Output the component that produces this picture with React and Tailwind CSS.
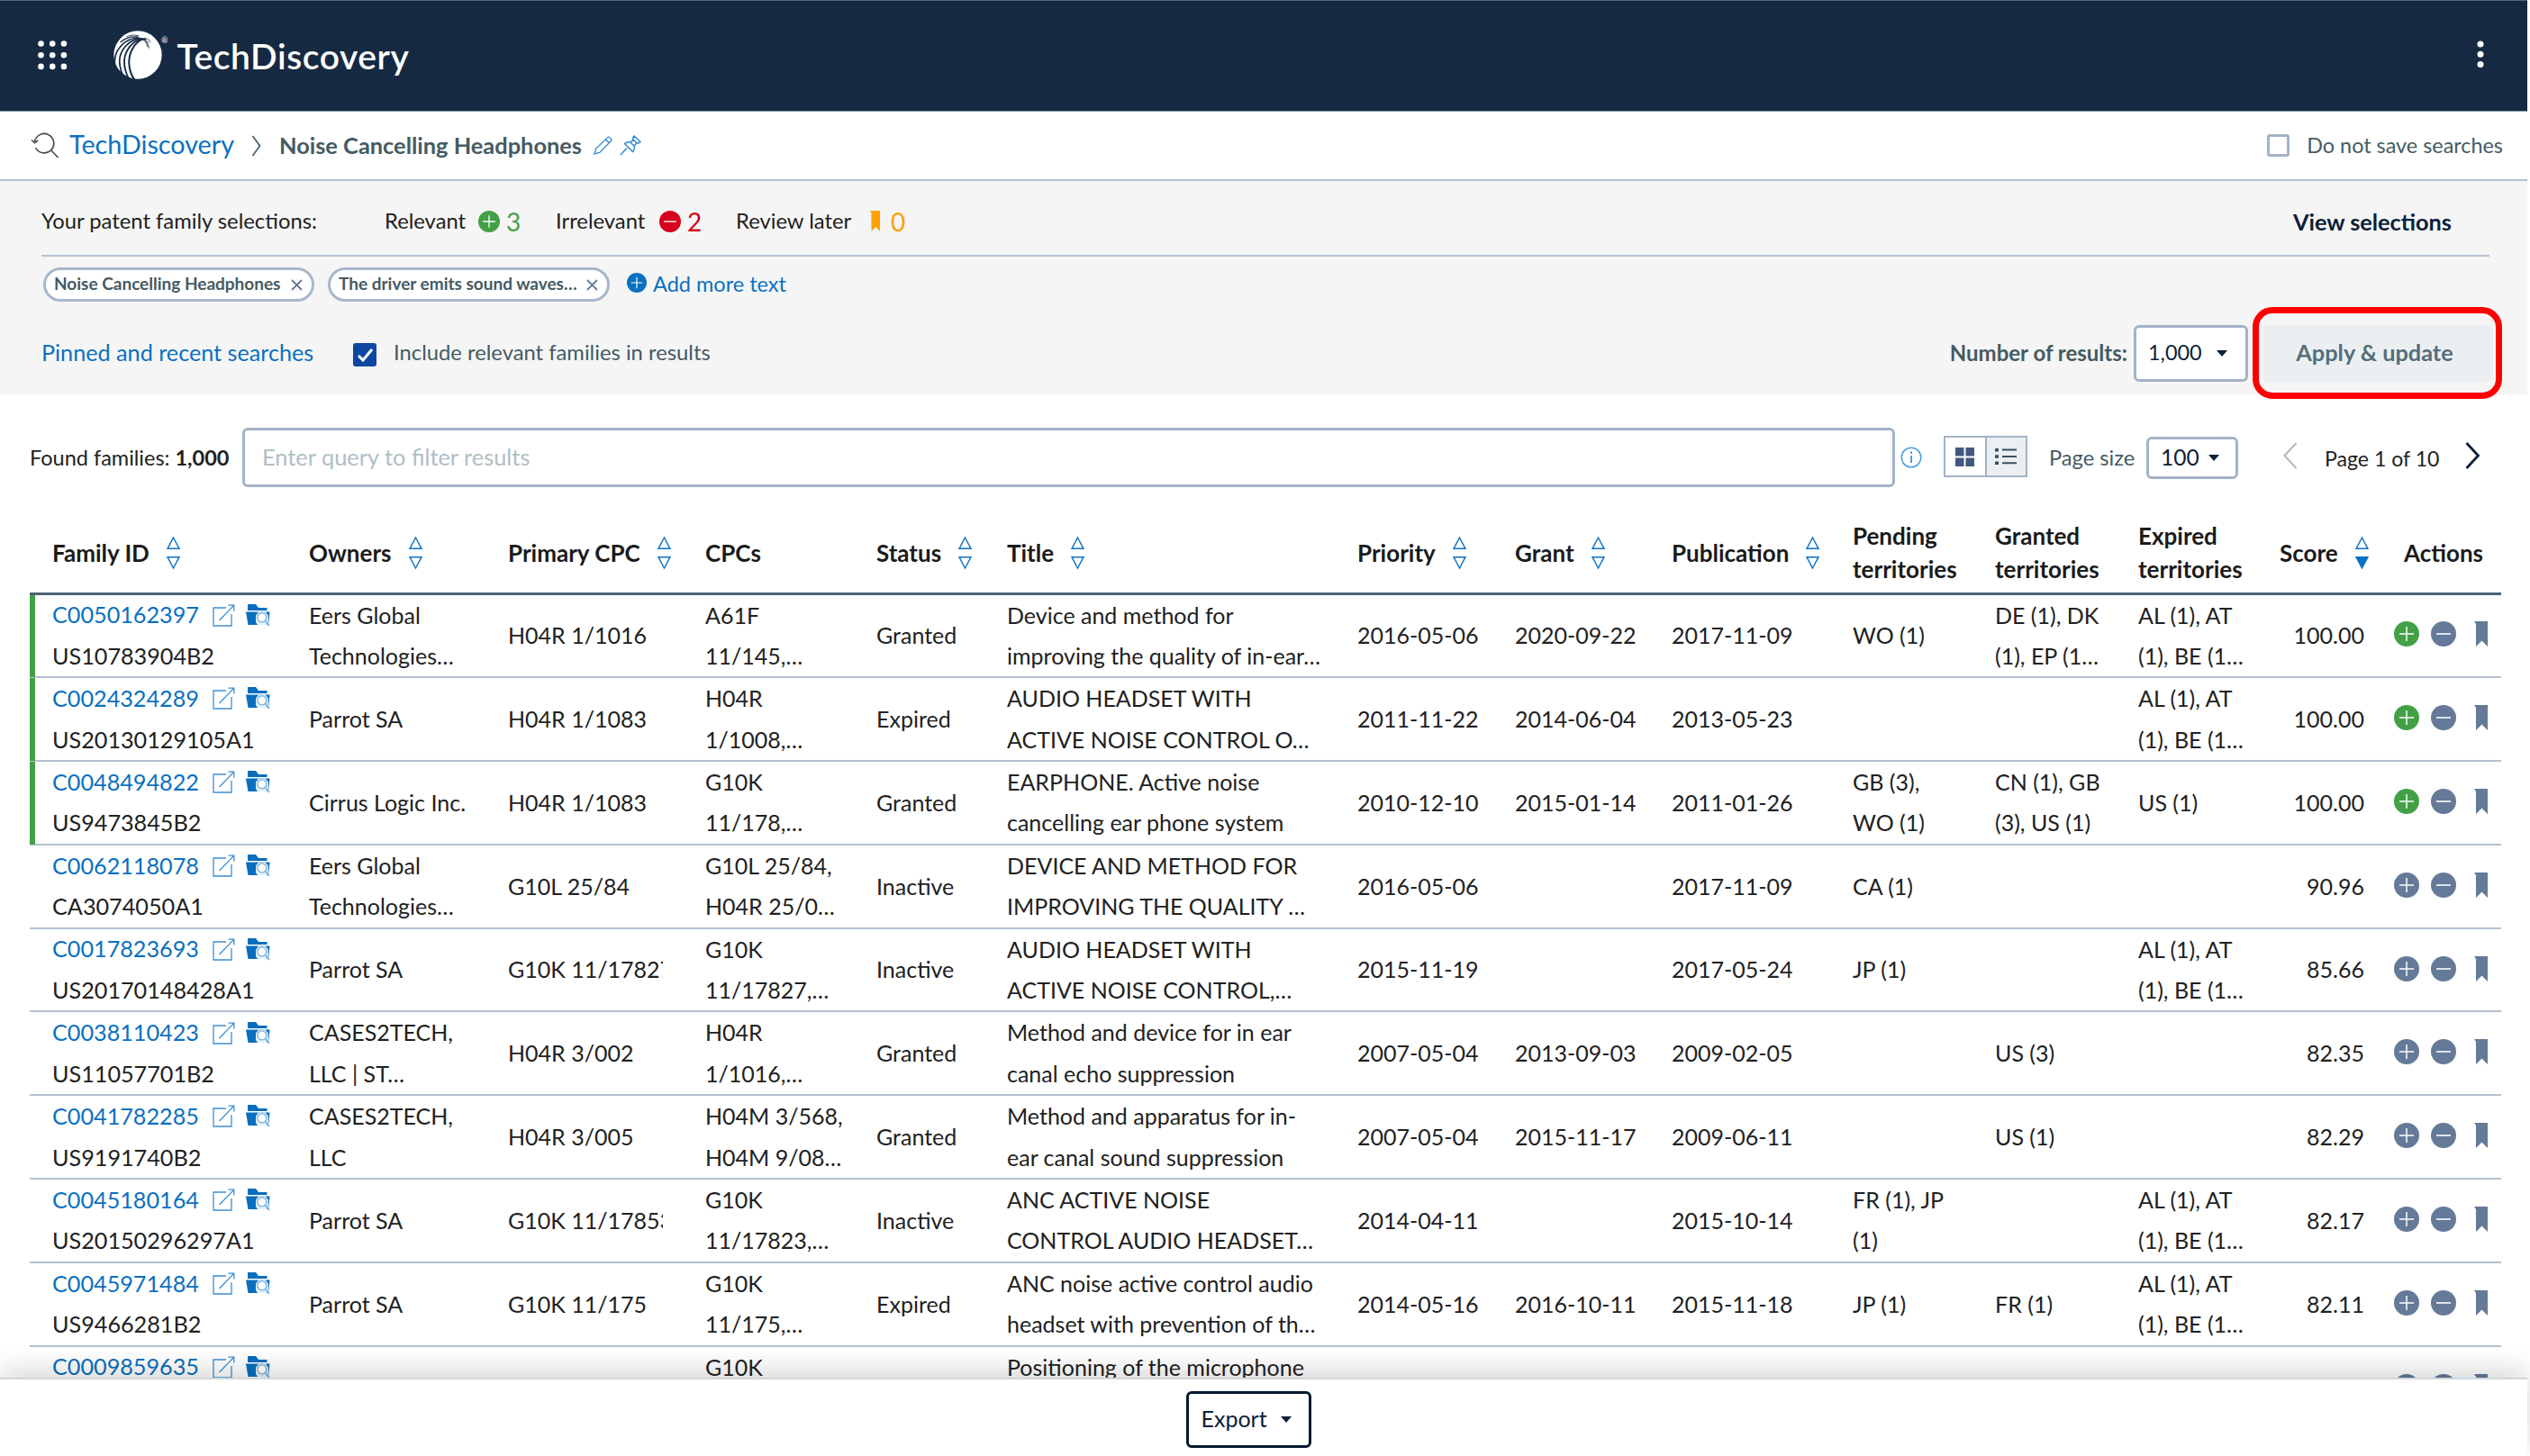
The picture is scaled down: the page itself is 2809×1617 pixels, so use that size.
import { useState } from 'react';
import clsx from 'clsx';

const families = [
  { id: 'C0050162397', pub: 'US10783904B2', owners: ['Eers Global', 'Technologies…'], cpc: 'H04R 1/1016', cpcs: ['A61F', '11/145,…'], status: 'Granted', title: ['Device and method for', 'improving the quality of in-ear…'], priority: '2016-05-06', grant: '2020-09-22', publication: '2017-11-09', pending: ['WO (1)'], granted: ['DE (1), DK', '(1), EP (1…'], expired: ['AL (1), AT', '(1), BE (1…'], score: '100.00', relevant: true },
  { id: 'C0024324289', pub: 'US20130129105A1', owners: ['Parrot SA'], cpc: 'H04R 1/1083', cpcs: ['H04R', '1/1008,…'], status: 'Expired', title: ['AUDIO HEADSET WITH', 'ACTIVE NOISE CONTROL O…'], priority: '2011-11-22', grant: '2014-06-04', publication: '2013-05-23', pending: [], granted: [], expired: ['AL (1), AT', '(1), BE (1…'], score: '100.00', relevant: true },
  { id: 'C0048494822', pub: 'US9473845B2', owners: ['Cirrus Logic Inc.'], cpc: 'H04R 1/1083', cpcs: ['G10K', '11/178,…'], status: 'Granted', title: ['EARPHONE. Active noise', 'cancelling ear phone system'], priority: '2010-12-10', grant: '2015-01-14', publication: '2011-01-26', pending: ['GB (3),', 'WO (1)'], granted: ['CN (1), GB', '(3), US (1)'], expired: ['US (1)'], score: '100.00', relevant: true },
  { id: 'C0062118078', pub: 'CA3074050A1', owners: ['Eers Global', 'Technologies…'], cpc: 'G10L 25/84', cpcs: ['G10L 25/84,', 'H04R 25/0…'], status: 'Inactive', title: ['DEVICE AND METHOD FOR', 'IMPROVING THE QUALITY …'], priority: '2016-05-06', grant: '', publication: '2017-11-09', pending: ['CA (1)'], granted: [], expired: [], score: '90.96' },
  { id: 'C0017823693', pub: 'US20170148428A1', owners: ['Parrot SA'], cpc: 'G10K 11/17827', cpcs: ['G10K', '11/17827,…'], status: 'Inactive', title: ['AUDIO HEADSET WITH', 'ACTIVE NOISE CONTROL,…'], priority: '2015-11-19', grant: '', publication: '2017-05-24', pending: ['JP (1)'], granted: [], expired: ['AL (1), AT', '(1), BE (1…'], score: '85.66' },
  { id: 'C0038110423', pub: 'US11057701B2', owners: ['CASES2TECH,', 'LLC | ST…'], cpc: 'H04R 3/002', cpcs: ['H04R', '1/1016,…'], status: 'Granted', title: ['Method and device for in ear', 'canal echo suppression'], priority: '2007-05-04', grant: '2013-09-03', publication: '2009-02-05', pending: [], granted: ['US (3)'], expired: [], score: '82.35' },
  { id: 'C0041782285', pub: 'US9191740B2', owners: ['CASES2TECH,', 'LLC'], cpc: 'H04R 3/005', cpcs: ['H04M 3/568,', 'H04M 9/08…'], status: 'Granted', title: ['Method and apparatus for in-', 'ear canal sound suppression'], priority: '2007-05-04', grant: '2015-11-17', publication: '2009-06-11', pending: [], granted: ['US (1)'], expired: [], score: '82.29' },
  { id: 'C0045180164', pub: 'US20150296297A1', owners: ['Parrot SA'], cpc: 'G10K 11/17853', cpcs: ['G10K', '11/17823,…'], status: 'Inactive', title: ['ANC ACTIVE NOISE', 'CONTROL AUDIO HEADSET…'], priority: '2014-04-11', grant: '', publication: '2015-10-14', pending: ['FR (1), JP', '(1)'], granted: [], expired: ['AL (1), AT', '(1), BE (1…'], score: '82.17' },
  { id: 'C0045971484', pub: 'US9466281B2', owners: ['Parrot SA'], cpc: 'G10K 11/175', cpcs: ['G10K', '11/175,…'], status: 'Expired', title: ['ANC noise active control audio', 'headset with prevention of th…'], priority: '2014-05-16', grant: '2016-10-11', publication: '2015-11-18', pending: ['JP (1)'], granted: ['FR (1)'], expired: ['AL (1), AT', '(1), BE (1…'], score: '82.11' },
  { id: 'C0009859635', pub: '', owners: [], cpc: '', cpcs: ['G10K', ''], status: '', title: ['Positioning of the microphone', ''], priority: '', grant: '', publication: '', pending: [], granted: [], expired: [], score: '' },
];

const columns = [
  { lines: ['Family ID'], sort: 'none' },
  { lines: ['Owners'], sort: 'none' },
  { lines: ['Primary CPC'], sort: 'none' },
  { lines: ['CPCs'] },
  { lines: ['Status'], sort: 'none' },
  { lines: ['Title'], sort: 'none' },
  { lines: ['Priority'], sort: 'none' },
  { lines: ['Grant'], sort: 'none' },
  { lines: ['Publication'], sort: 'none' },
  { lines: ['Pending', 'territories'] },
  { lines: ['Granted', 'territories'] },
  { lines: ['Expired', 'territories'] },
  { lines: ['Score'], sort: 'desc' },
  { lines: ['Actions'] },
];

const gridCols =
  'grid grid-cols-[288px_221px_219px_190px_145px_389px_175px_174px_201px_158px_159px_157px_127px_141px]';

const EagleLogo = () => (
  <svg width="54" height="54" viewBox="0 0 162 162" className="shrink-0">
    <circle cx="81" cy="81" r="80" fill="#fff" />
    <g fill="none" stroke="#152a42" strokeLinecap="round">
      <path d="M96 29C70 40 50 74 52 110c1 22 8 40 18 54" strokeWidth="6" />
      <path d="M92 28C62 36 38 66 36 100c-1 24 6 44 16 62" strokeWidth="5.5" />
      <path d="M88 26C56 30 28 56 21 90c-3 20 2 40 10 58" strokeWidth="5" />
      <path d="M84 24C54 24 24 42 9 76c-5 14-6 28-4 42" strokeWidth="5" />
      <path d="M80 21C60 19 40 24 24 38" strokeWidth="4" />
      <path d="M84 17C70 13 56 15 44 20" strokeWidth="2.5" />
      <path d="M88 28c12 0 22 4 30 13M100 30c10 6 16 14 18 28M104 36c6 6 8 10 9 17M108 26c8 2 12 6 15 11" strokeWidth="2.5" />
      <path d="M93 28h12" strokeWidth="7" />
    </g>
  </svg>
);

const AppsIcon = () => (
  <svg width="33" height="33" viewBox="0 0 33 33" fill="#fff">
    {[3.5, 16.2, 28.9].map(y => [3.5, 16.2, 28.9].map(x => <circle key={`${x}-${y}`} cx={x} cy={y} r="3.3" />))}
  </svg>
);

const SearchBackIcon = () => (
  <svg width="32" height="30" viewBox="0 0 32 30" fill="none" stroke="#4a4a4a" strokeWidth="1.6">
    <path d="M4.5 10.5A10.7 10.7 0 1 1 5.5 17M22.5 19.5l8 8.500" />
    <path d="M1 8.5l3.5 3.2 3.7-2.7" />
  </svg>
);

const Chevron = ({ dir = 'right', w = 11, h = 24, color = '#546e7a', stroke = 2 }) => (
  <svg width={w} height={h} viewBox={`0 0 ${w} ${h}`} fill="none" stroke={color} strokeWidth={stroke}>
    <path d={dir === 'right' ? `M1.5 1L${w - 1.5} ${h / 2}L1.5 ${h - 1}` : `M${w - 1.5} 1L1.5 ${h / 2}L${w - 1.5} ${h - 1}`} />
  </svg>
);

const PencilIcon = () => (
  <svg width="21" height="21" viewBox="0 0 21 21" fill="none" stroke="#2f87d0" strokeWidth="1.3">
    <path d="M1 20l1.8-6L15.500 1.600a1.600 1.600 0 0 1 2.300 0l1.600 1.600a1.600 1.600 0 0 1 0 2.300L7 18.200zM13.300 3.800l4 4" />
  </svg>
);

const PinIcon = () => (
  <svg width="24" height="23" viewBox="0 0 24 23" fill="none" stroke="#2f87d0" strokeWidth="1.4">
    <path d="M1 22l7-7.5M5.5 9.5c2-1.7 4.5-2 6.5-1.3L15 5c-.5-1.5-.2-3 1-4l7 6.5c-1 1.3-2.5 1.7-4 1.3L16 12c.8 2.2.3 4.7-1.5 6.5zM15 5l4 3.800M12 8.200L16 12" />
  </svg>
);

const SortIcon = ({ active }) => (
  <svg width="17" height="38" viewBox="0 0 17 38" fill="none" stroke="#0a72c4" strokeWidth="1.4" className="shrink-0">
    <path d="M8.5 2L15 14.300H2z" />
    <path d="M8.5 36L15 23.700H2z" fill={active ? '#0a72c4' : 'none'} />
  </svg>
);

const PlusCircle = ({ size = 28, color }) => (
  <svg width={size} height={size} viewBox="0 0 28 28" className="shrink-0">
    <circle cx="14" cy="14" r="14" fill={color} />
    <path d="M14 6v16M6 14h16" stroke="#fff" strokeWidth="1.5" />
  </svg>
);

const MinusCircle = ({ size = 28, color }) => (
  <svg width={size} height={size} viewBox="0 0 28 28" className="shrink-0">
    <circle cx="14" cy="14" r="14" fill={color} />
    <path d="M6 14h16" stroke="#fff" strokeWidth="1.6" />
  </svg>
);

const Bookmark = ({ width = 15, height = 28, color }) => (
  <svg width={width} height={height} viewBox="0 0 15 28" preserveAspectRatio="none" className="shrink-0">
    <path d="M0 0h15v28l-6.500-6.500L2 28V3z" fill={color} />
  </svg>
);

const ExternalIcon = () => (
  <svg width="25" height="25" viewBox="0 0 25 25" fill="none" stroke="#3d8fd3" strokeWidth="1.3">
    <path d="M15 4H1v20h20V11M7.500 18L23.500 1.500M17.500 1.200h6.300v6.300" />
  </svg>
);

const FolderSearchIcon = () => (
  <svg width="27" height="25" viewBox="0 0 27 25">
    <path d="M2 0h9l3 4h9.500v3H2z" fill="#0a6ebd" />
    <path d="M0 8.500h26.500L25 23H2.500z" fill="#0a6ebd" />
    <path d="M11 12.500L14 8.500h7.500l3.300 4v9l-2 1.500H13l-2-3z" fill="#e6f0f9" />
    <circle cx="17.800" cy="14.800" r="5" fill="#fff" stroke="#6faddd" strokeWidth="1.200" />
    <path d="M21.500 18.500l4.500 5.500" stroke="#6faddd" strokeWidth="1.500" />
  </svg>
);

const Caret = () => (
  <span className="block h-0 w-0 shrink-0 border-x-[6.5px] border-t-[7.5px] border-x-transparent border-t-[#0b2138]" />
);

const Close = () => (
  <svg width="13" height="13" viewBox="0 0 13 13" stroke="#647a98" strokeWidth="1.8" className="mt-0.5">
    <path d="M1 1l11 11M12 1L1 12" />
  </svg>
);

const Chip = ({ label, width }) => (
  <div
    className="flex h-[38px] shrink-0 items-center justify-between rounded-full border-3 border-[#a8b7cb] bg-white pr-2.5 pb-0.5 pl-[9px] text-[19px] font-bold whitespace-nowrap text-[#455a64]"
    style={{ width }}
  >
    {label}
    <Close />
  </div>
);

const Cell = ({ lines, className }) => (
  <div className={clsx('flex flex-col justify-center overflow-hidden pl-[22px] whitespace-pre', className)}>
    {lines.map((line, i) => (
      <div key={i} className="h-[45.4px] leading-[45.4px]">{line}</div>
    ))}
  </div>
);

const FamilyRow = ({ family }) => (
  <div className={clsx(gridCols, 'relative h-[92.8px] border-b-2 border-[#b4c1d2]')}>
    {family.relevant && <span className="absolute top-0 -bottom-px left-0 w-1.5 bg-[#43a047]" />}
    <div className="pl-[25px]">
      <div className="flex h-[45.4px] items-center">
        <span className="w-[178px] text-[25.2px] text-[#0a70c0]">{family.id}</span>
        <ExternalIcon />
        <span className="ml-3"><FolderSearchIcon /></span>
      </div>
      <div className="h-[45.4px] text-[25.2px] leading-[45.4px]">{family.pub}</div>
    </div>
    <Cell lines={family.owners} />
    <Cell lines={[family.cpc]} className="mr-[25px]" />
    <Cell lines={family.cpcs} />
    <Cell lines={[family.status]} />
    <Cell lines={family.title} />
    <Cell lines={[family.priority]} />
    <Cell lines={[family.grant]} />
    <Cell lines={[family.publication]} />
    <Cell lines={family.pending} />
    <Cell lines={family.granted} />
    <Cell lines={family.expired} />
    <Cell lines={[family.score]} className="pr-[11px] text-right" />
    <div className="flex items-center pb-[3px] pl-[22px]">
      <PlusCircle color={family.relevant ? '#43a047' : '#647a98'} />
      <span className="ml-[13px]"><MinusCircle color="#647a98" /></span>
      <span className="ml-[20px]"><Bookmark color="#647a98" /></span>
    </div>
  </div>
);

export default function App() {
  const [saveOff, setSaveOff] = useState(false);
  const [query, setQuery] = useState('');

  return (
    <div className="relative flex h-[1617px] w-[2809px] flex-col overflow-hidden bg-white pr-[3px] font-['Lato',sans-serif] text-[25px] text-[#212121]">
      {/* Top bar */}
      <header className="flex h-[124px] shrink-0 items-center border-y border-t-[#53677b] border-b-[#8495a5] bg-[#152a42] pb-[2px]">
        <span className="ml-[42px]"><AppsIcon /></span>
        <span className="ml-[51px]"><EagleLogo /></span>
        <span className="mb-8 -ml-px text-[9px] text-white">®</span>
        <span className="ml-[10px] pt-[3px] text-[39px] leading-none font-semibold tracking-[0.55px] text-white">TechDiscovery</span>
        <svg width="8" height="31" viewBox="0 0 8 31" fill="#fff" className="mr-[48px] mb-[2px] ml-auto">
          <circle cx="4" cy="4" r="3.5" />
          <circle cx="4" cy="15.3" r="3.5" />
          <circle cx="4" cy="26.6" r="3.5" />
        </svg>
      </header>

      {/* Breadcrumb */}
      <nav className="flex h-[77px] shrink-0 items-center border-b-2 border-[#b4c1d2]">
        <span className="ml-[34px]"><SearchBackIcon /></span>
        <a className="ml-[11px] w-[202px] pb-px text-[28.7px] text-[#0a70c0]">TechDiscovery</a>
        <Chevron />
        <span className="ml-[20px] w-[349px] text-[25.4px] font-bold whitespace-nowrap text-[#455a64]">Noise Cancelling Headphones</span>
        <PencilIcon />
        <span className="ml-2"><PinIcon /></span>
        <label className="mr-[27px] ml-auto flex items-center text-[23.4px] text-[#455a64]">
          <input type="checkbox" checked={saveOff} onChange={() => setSaveOff(!saveOff)} className="mr-[19px] h-[25px] w-[25px] appearance-none rounded-[3px] border-3 border-[#a3b3c8]" />
          Do not save searches
        </label>
      </nav>

      {/* Selections and query panel */}
      <section className="h-[237px] shrink-0 bg-[#f5f5f5] pl-[46px] text-[23.8px]">
        <div className="mr-[42px] flex h-[84px] items-center border-b-2 border-[#b4c1d2] pt-[7px] whitespace-nowrap">
          <span className="w-[381px]">Your patent family selections:</span>
          <span className="w-[104px]">Relevant</span>
          <PlusCircle size={24} color="#43a047" />
          <span className="ml-[7px] w-[55px] text-[28px] leading-none text-[#43a047]">3</span>
          <span className="w-[115px]">Irrelevant</span>
          <MinusCircle size={24} color="#d6001c" />
          <span className="ml-[7px] w-[54px] text-[28px] leading-none text-[#d6001c]">2</span>
          <span className="w-[149px]">Review later</span>
          <Bookmark width={11} height={23} color="#ffa000" />
          <span className="ml-[12px] text-[28px] leading-none text-[#ffa000]">0</span>
          <a className="mr-[42px] ml-auto pt-0.5 text-[25.3px] font-bold text-[#0b2138]">View selections</a>
        </div>
        <div className="flex h-[62px] items-center">
          <span className="ml-0.5"><Chip label="Noise Cancelling Headphones" width={301} /></span>
          <span className="mr-[19px] ml-[15px]"><Chip label="The driver emits sound waves…" width={313} /></span>
          <span className="pb-1"><PlusCircle size={22} color="#0a70c0" /></span>
          <a className="ml-[7px] text-[23.5px] text-[#0a70c0]">Add more text</a>
        </div>
        <div className="flex h-[90px] items-center whitespace-nowrap">
          <a className="w-[346px] text-[25.2px] text-[#0a70c0]">Pinned and recent searches</a>
          <span className="mt-1 flex h-[26px] w-[26px] items-center justify-center rounded-[3px] bg-[#0d47a1]">
            <svg width="17" height="15" viewBox="0 0 17 15" fill="none" stroke="#fff" strokeWidth="3">
              <path d="M1 8l5 5L16 1" />
            </svg>
          </span>
          <span className="ml-[19px] text-[#455a64]">Include relevant families in results</span>
          <span className="ml-auto text-[24px] font-bold text-[#455a64]">Number of results:</span>
          <button className="ml-[7px] flex h-[63px] w-[127px] items-center justify-between rounded-[6px] border-3 border-[#a3b3c8] bg-white pr-[20px] pl-[13px] text-[23.4px] text-[#0b2138]">
            1,000
            <Caret />
          </button>
          <div className="mr-[28px] ml-[5px] flex h-[102px] w-[277px] shrink-0 items-center justify-center rounded-[22px] border-7 border-[#ff0000]">
            <button className="h-[63px] w-[256px] rounded-[6px] bg-[#ebeff2] pr-1.5 text-[25.3px] font-bold text-[#546e7a]">Apply &amp; update</button>
          </div>
        </div>
      </section>

      {/* Result filter and paging */}
      <div className="flex h-[132px] shrink-0 items-center pt-2 pl-[33px] whitespace-nowrap">
        <span className="w-[236px] pt-0.5 text-[23.5px]">Found families: <b>1,000</b></span>
        <input
          value={query}
          onChange={e => setQuery(e.target.value)}
          placeholder="Enter query to filter results"
          className="h-[66px] w-[1835px] rounded-[6px] border-3 border-[#a3b3c8] pb-[2px] pl-[19px] text-[25.4px] placeholder:text-[#b0bec5]"
        />
        <svg width="24" height="24" viewBox="0 0 24 24" fill="none" stroke="#4a9fe0" className="ml-[6px]">
          <circle cx="12" cy="12" r="10.8" strokeWidth="1.5" />
          <path d="M12 10v8M12 5.500v2.500" strokeWidth="2" />
        </svg>
        <div className="mb-[2px] ml-6 flex h-[46px] w-[93px] border-2 border-[#a3b3c8]">
          <button className="flex flex-1 items-center justify-center border-r-2 border-[#a3b3c8]">
            <svg width="21" height="21" viewBox="0 0 21 21" fill="#425880">
              <path d="M0 0h9.5v9.500H0zM11.500 0H21v9.500h-9.500zM0 11.500h9.500V21H0zM11.500 11.500H21V21h-9.500z" />
            </svg>
          </button>
          <button className="flex flex-1 items-center justify-center bg-[#ebeff2]">
            <svg width="24" height="20" viewBox="0 0 24 20" fill="#37505e">
              <path d="M0 1h4v3.500H0zM0 8.300h4v3.500H0zM0 15.500h4V19H0zM8 1.600h16v2H8zM8 8.900h16v2H8zM8 16.200h16v2H8z" />
            </svg>
          </button>
        </div>
        <span className="ml-6 w-[108px] pt-0.5 text-[23.7px] text-[#455a64]">Page size</span>
        <button className="flex h-[47px] w-[102px] items-center justify-between rounded-[6px] border-3 border-[#a3b3c8] pr-[18px] pl-[13px] text-[24.5px] text-[#0b2138]">
          100
          <Caret />
        </button>
        <span className="mb-1 ml-[50px]"><Chevron dir="left" w={16} h={30} color="#b0bec5" stroke={2.2} /></span>
        <span className="ml-[30px] w-[156px] pt-0.5 text-[23.1px]">Page 1 of 10</span>
        <span className="mb-1"><Chevron w={16} h={30} color="#0b2138" stroke={2.8} /></span>
      </div>

      {/* Families table */}
      <div className="mr-[29px] ml-[33px]">
        <div className={clsx(gridCols, 'h-[90.500px] border-b-3 border-[#4b6572] text-[26px] font-bold text-[#1b1b1b]')}>
          {columns.map(({ lines, sort }, i) => (
            <div
              key={lines.join()}
              className={clsx('flex items-center gap-[18px] whitespace-nowrap', i === 0 ? 'pl-[25px]' : i === 13 ? 'pl-[33px]' : 'pl-[22px]')}
            >
              <div className="leading-[36.5px]">
                {lines.map(line => <div key={line}>{line}</div>)}
              </div>
              {sort && <SortIcon active={sort === 'desc'} />}
            </div>
          ))}
        </div>
        {families.map(family => <FamilyRow key={family.id} family={family} />)}
      </div>

      <footer className="absolute bottom-0 left-0 flex h-[87px] w-[2806px] items-center justify-center border-t-2 border-[#cfd8dc] bg-white pt-[3px] shadow-[0_-8px_30px_rgba(0,0,0,0.16)]">
        <button className="mr-[34px] flex h-[63px] w-[139px] items-center justify-between rounded-[6px] border-3 border-[#001930] pr-[19px] pl-[14px] text-[#0b2138]">
          Export
          <Caret />
        </button>
      </footer>
    </div>
  );
}
